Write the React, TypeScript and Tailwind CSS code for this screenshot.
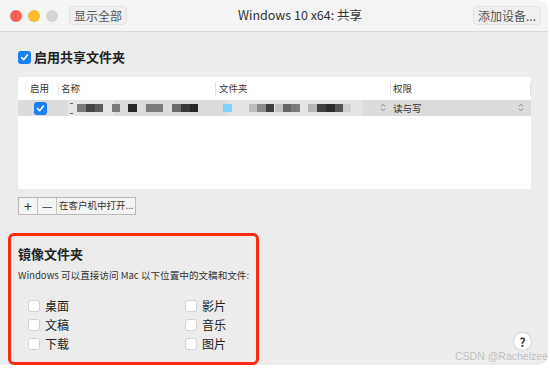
import React from "react";

const FONT = { fontFamily: '"Noto Sans CJK SC", "Noto Sans", sans-serif' };

// Pixelated blur blocks in the table row: [left, width, colour]
const nameBlocks: [number, number, string][] = [
  [77, 9, "#7a7a7a"],
  [86, 9, "#454545"],
  [95, 8, "#5c5c5c"],
  [112, 8, "#7b7b7b"],
  [128, 9, "#262626"],
  [146, 17, "#7c7c7c"],
  [172, 9, "#6a6a6a"],
  [181, 9, "#3a3a3a"],
  [190, 8, "#262626"],
];
const folderBlocks: [number, number, string][] = [
  [223, 9, "#7fd1ff"],
  [249, 8, "#bdbdbd"],
  [257, 9, "#8a8a8a"],
  [266, 8, "#404040"],
  [275, 9, "#c2c2c2"],
  [283, 8, "#666666"],
  [291, 9, "#7a7a7a"],
  [308, 9, "#b5b5b5"],
  [317, 9, "#404040"],
  [326, 9, "#2e2e2e"],
  [335, 8, "#555555"],
  [343, 8, "#cfcfcf"],
];

function Check({ checked }: { checked?: boolean }) {
  return checked ? (
    <span className="flex h-[13px] w-[13px] items-center justify-center rounded-[3px] bg-[#1b7ff5]">
      <svg width="9" height="9" viewBox="0 0 10 10">
        <path
          d="M1.8 5.2 L4 7.4 L8.3 2.3"
          fill="none"
          stroke="white"
          strokeWidth="1.8"
          strokeLinecap="round"
          strokeLinejoin="round"
        />
      </svg>
    </span>
  ) : (
    <span className="block h-[12px] w-[12px] rounded-[3px] border border-[#d2d2d2] bg-white" />
  );
}

function Stepper() {
  return (
    <svg width="6" height="9" viewBox="0 0 6 9">
      <path d="M1 3.3 L3 1.3 L5 3.3 M1 5.7 L3 7.7 L5 5.7" fill="none" stroke="#777" strokeWidth="0.9" />
    </svg>
  );
}

function Mirror({ label }: { label: string }) {
  return (
    <div className="flex h-[19px] items-center gap-[5px]">
      <Check />
      <span className="text-[12px] text-[#222]">{label}</span>
    </div>
  );
}

export default function App() {
  return (
    <div className="relative h-[368px] w-[550px] overflow-hidden bg-white" style={FONT}>
      <div className="relative flex h-[365px] w-[548px] flex-col overflow-hidden rounded-r-[10px] bg-[#ececec]">
        {/* title bar */}
        <div className="flex h-[32px] items-center border-b border-[#d9d9d9] bg-[#f4f4f4] pl-[10px] pr-[7px]">
          <div className="flex gap-[6px]">
            <span className="h-[12px] w-[12px] rounded-full bg-[#fe5f57]" />
            <span className="h-[12px] w-[12px] rounded-full bg-[#febc2e]" />
            <span className="h-[12px] w-[12px] rounded-full bg-[#d5d5d5]" />
          </div>
          <button className="ml-[11px] h-[19px] rounded-[4px] border border-[#e2e2e2] bg-[#efefef] px-[4px] text-[12px] leading-none text-[#555]">
            显示全部
          </button>
          <div className="flex-1 text-center text-[12.5px] text-[#333]">Windows 10 x64: 共享</div>
          <button className="h-[19px] rounded-[4px] border border-[#e2e2e2] bg-[#efefef] px-[4px] text-[12px] leading-none text-[#555]">
            添加设备...
          </button>
        </div>

        <div className="flex flex-col pl-[18px] pr-[17px]">
          <div className="mt-[17px] flex h-[16px] items-center gap-[3px]">
            <Check checked />
            <span className="text-[13px] font-bold text-[#222]">启用共享文件夹</span>
          </div>

          {/* table */}
          <div className="relative mt-[12px] h-[112px] w-[513px] bg-white">
            <div className="flex h-[23px] items-center text-[9.5px] text-[#333]">
              <div className="w-[40px] pl-[12px]">启用</div>
              <div className="h-[14px] w-px bg-[#e3e3e3]" />
              <div className="w-[156px] pl-[2px]">名称</div>
              <div className="h-[14px] w-px bg-[#e3e3e3]" />
              <div className="w-[174px] pl-[3px]">文件夹</div>
              <div className="h-[14px] w-px bg-[#e3e3e3]" />
              <div className="flex-1 pl-[2px]">权限</div>
              <div className="h-[14px] w-px bg-[#e3e3e3]" />
            </div>
            <div className="relative flex h-[16px] items-center bg-[#dcdcdc]">
              <div className="ml-[16px]">
                <Check checked />
              </div>
              <div className="absolute left-[50px] top-0 h-[16px] w-[46px] bg-[#e6e6e6]" />
              <div className="absolute left-[210px] top-0 h-[16px] w-[135px] bg-[#e4e4e4]" />
              <div className="absolute left-[52px] top-[3px] h-px w-[3px] bg-[#666]" />
              <div className="absolute left-[52px] top-[13px] h-px w-[3px] bg-[#666]" />
              {[...nameBlocks, ...folderBlocks].map(([x, w, c], i) => (
                <div
                  key={i}
                  className="absolute top-[4px] h-[8px]"
                  style={{ left: x - 18, width: w, background: c }}
                />
              ))}
              <div className="absolute left-[362px] top-[3px]">
                <Stepper />
              </div>
              <span className="absolute left-[375px] top-0 text-[9.5px] leading-[16px] text-[#333]">读与写</span>
              <div className="absolute left-[500px] top-[3px]">
                <Stepper />
              </div>
            </div>
          </div>

          {/* buttons */}
          <div className="mt-[8px] flex h-[18px] w-fit border border-[#b9b9b9] bg-[#f4f4f4] text-[#333]">
            <div className="flex w-[19px] items-center justify-center border-r border-[#c4c4c4] text-[14px] leading-none">+</div>
            <div className="flex w-[19px] items-center justify-center border-r border-[#c4c4c4] text-[12px] leading-none">—</div>
            <div className="flex items-center whitespace-nowrap px-[2px] text-[9.5px] leading-none">在客户机中打开...</div>
          </div>
        </div>

        {/* mirror folders */}
        <div className="ml-[8px] mt-[18px] h-[132px] w-[251px] rounded-[6px] border-[3px] border-[#fb2b0e] pl-[7px] pt-[9px]">
          <div className="text-[13px] font-bold leading-[18px] text-[#222]">镜像文件夹</div>
          <div className="mt-[5px] whitespace-nowrap text-[9.6px] leading-[14px] text-[#333]">
            Windows 可以直接访问 Mac 以下位置中的文稿和文件:
          </div>
          <div className="mt-[14px] flex pl-[10px]">
            <div className="w-[157px]">
              <Mirror label="桌面" />
              <Mirror label="文稿" />
              <Mirror label="下载" />
            </div>
            <div>
              <Mirror label="影片" />
              <Mirror label="音乐" />
              <Mirror label="图片" />
            </div>
          </div>
        </div>

        {/* help */}
        <div className="absolute left-[514px] top-[333px] flex h-[17px] w-[17px] items-center justify-center rounded-full bg-white text-[12px] font-bold text-[#333] shadow-[0_0_2px_rgba(0,0,0,0.3)]">
          ?
        </div>
      </div>
      {/* watermark */}
      <div
        className="absolute left-[455px] top-[350px] whitespace-nowrap text-[10.5px] leading-[13px] text-[#bdbdbd]"
        style={{ fontFamily: '"Liberation Sans", Arial, sans-serif', textShadow: "0 0 1px #fff" }}
      >
        CSDN @Rachelzee
      </div>
    </div>
  );
}
